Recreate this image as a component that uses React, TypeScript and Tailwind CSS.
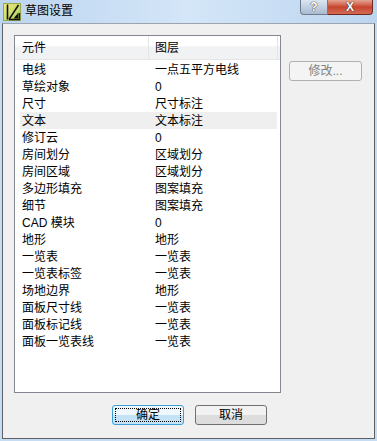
import React from "react";

// ─── Data ─────────────────────────────────────────────────────────────────────

const rows: { name: string; layer: string }[] = [
  { name: "电线", layer: "一点五平方电线" },
  { name: "草绘对象", layer: "0" },
  { name: "尺寸", layer: "尺寸标注" },
  { name: "文本", layer: "文本标注" },
  { name: "修订云", layer: "0" },
  { name: "房间划分", layer: "区域划分" },
  { name: "房间区域", layer: "区域划分" },
  { name: "多边形填充", layer: "图案填充" },
  { name: "细节", layer: "图案填充" },
  { name: "CAD 模块", layer: "0" },
  { name: "地形", layer: "地形" },
  { name: "一览表", layer: "一览表" },
  { name: "一览表标签", layer: "一览表" },
  { name: "场地边界", layer: "地形" },
  { name: "面板尺寸线", layer: "一览表" },
  { name: "面板标记线", layer: "一览表" },
  { name: "面板一览表线", layer: "一览表" },
];

// ─── Title icon ───────────────────────────────────────────────────────────────

function DraftIcon() {
  return (
    <svg width="18" height="18" viewBox="0 0 18 18">
      <defs>
        <linearGradient id="ig" x1="0" y1="0" x2="1" y2="1">
          <stop offset="0" stopColor="#f4e87c" />
          <stop offset="1" stopColor="#a6d25e" />
        </linearGradient>
      </defs>
      <rect x="0.5" y="0.5" width="17" height="17" fill="url(#ig)" stroke="#95a84a" />
      <path d="M4.5 1.5 V16.5" stroke="#111" strokeWidth="1.6" />
      <path d="M6 16.5 L15.5 2" stroke="#111" strokeWidth="1.5" />
      <path d="M6 16.5 H16.5 V10" fill="none" stroke="#111" strokeWidth="1.3" />
      <path d="M10.5 15.5 H15.5 V9.5 Z" fill="#111" />
    </svg>
  );
}

// ─── App ──────────────────────────────────────────────────────────────────────

export default function App() {
  return (
    <div className="w-[377px] h-[441px] bg-[#c6dcf2] flex flex-col font-['Liberation_Sans','Noto_Sans_CJK_SC',sans-serif] text-[12px] text-black leading-none">
      {/* Title bar */}
      <div className="h-[23px] shrink-0 flex items-start bg-gradient-to-r from-[#bcd5ef] via-[#d4e6f8] to-[#bcd5ef]">
        <div className="pl-[3px] pt-[3px]">
          <DraftIcon />
        </div>
        <span className="ml-[4px] mt-[5px] text-[12px] text-black">草图设置</span>
        <div className="ml-auto mr-[4px] flex">
          <div className="w-[28px] h-[15px] rounded-bl-[4px] border border-t-0 border-[#6d7b8d] bg-gradient-to-b from-[#dbe6f2] to-[#a9bbd0] flex items-center justify-center text-white font-bold text-[12px] [text-shadow:0_0_1px_#333,0_0_1px_#333]">
            ?
          </div>
          <div className="w-[45px] h-[15px] rounded-br-[4px] border border-l-0 border-t-0 border-[#6e2a22] bg-gradient-to-b from-[#e4a593] via-[#c8432e] to-[#d46b55] flex items-center justify-center text-white font-bold text-[12px] [text-shadow:0_0_1px_#222,0_0_1px_#222]">
            X
          </div>
        </div>
      </div>

      {/* Client area */}
      <div className="mx-[2px] mb-[2px] flex-1 flex flex-col bg-[#f0f0f0] border border-[#9aa5b1] border-l-[#5d6166] border-r-[#5d6166] border-b-[#5d6166]">
        <div className="flex pt-[11px] pl-[11px]">
          {/* List */}
          <div className="w-[267px] h-[358px] border border-[#828790] bg-white flex flex-col">
            <div className="h-[24px] flex bg-gradient-to-b from-white from-40% to-[#f1f2f4] to-50% border-b border-[#e5e5e5]">
              <div className="w-[133px] pl-[7px] flex items-center">元件</div>
              <div className="w-px h-full bg-[#e3e5e8]" />
              <div className="w-[128px] pl-[6px] flex items-center">图层</div>
              <div className="w-px h-full bg-[#e3e5e8]" />
            </div>
            <div className="pt-[1px] flex flex-col">
              {rows.map((r) => (
                <div
                  key={r.name}
                  className={`ml-[5px] w-[257px] h-[17px] pl-[2px] flex items-center ${
                    r.name === "文本" ? "bg-[#efefef]" : ""
                  }`}
                >
                  <span className="w-[133px] shrink-0">{r.name}</span>
                  <span>{r.layer}</span>
                </div>
              ))}
            </div>
          </div>

          {/* Side button */}
          <div className="pl-[8px] pt-[26px]">
            <div className="w-[73px] h-[20px] rounded-[3px] border border-[#adb2b5] bg-[#f4f4f4] text-[#838383] flex items-center justify-center">
              修改...
            </div>
          </div>
        </div>

        {/* Bottom buttons */}
        <div className="flex pt-[12px] pl-[109px] gap-[11px]">
          <div className="w-[72px] h-[20px] rounded-[3px] border border-[#3c9fd8] bg-gradient-to-b from-[#eef7fd] from-50% to-[#c5e3f6] to-50% p-[2px]">
            <div className="w-full h-full border border-dotted border-black flex items-center justify-center">
              确定
            </div>
          </div>
          <div className="w-[72px] h-[20px] rounded-[3px] border border-[#707070] bg-gradient-to-b from-[#f2f2f2] from-50% to-[#dddddd] to-50% flex items-center justify-center">
            取消
          </div>
        </div>
      </div>
    </div>
  );
}
